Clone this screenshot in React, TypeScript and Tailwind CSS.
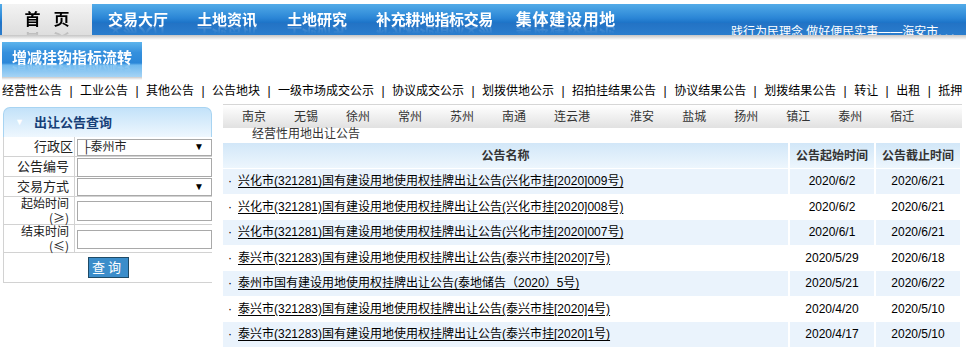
const NAV = [
  { label: "交易大厅", cls: "ml-[16px] text-[15px]" },
  { label: "土地资讯", cls: "ml-[29px] text-[15px]" },
  { label: "土地研究", cls: "ml-[30px] text-[15px]" },
  { label: "补充耕地指标交易", cls: "ml-[29px] text-[15px] tracking-[-0.4px]" },
  { label: "集体建设用地", cls: "ml-[23px] text-[16px] tracking-[0.7px]" },
];

const LINKS = [
  "经营性公告",
  "工业公告",
  "其他公告",
  "公告地块",
  "一级市场成交公示",
  "协议成交公示",
  "划拨供地公示",
  "招拍挂结果公告",
  "协议结果公告",
  "划拨结果公告",
  "转让",
  "出租",
  "抵押",
];

const CITIES = ["南京", "无锡", "徐州", "常州", "苏州", "南通", "连云港", "淮安", "盐城", "扬州", "镇江", "泰州", "宿迁"];

const ROWS = [
  { title: "兴化市(321281)国有建设用地使用权挂牌出让公告(兴化市挂[2020]009号)", start: "2020/6/2", end: "2020/6/21" },
  { title: "兴化市(321281)国有建设用地使用权挂牌出让公告(兴化市挂[2020]008号)", start: "2020/6/2", end: "2020/6/21" },
  { title: "兴化市(321281)国有建设用地使用权挂牌出让公告(兴化市挂[2020]007号)", start: "2020/6/1", end: "2020/6/21" },
  { title: "泰兴市(321283)国有建设用地使用权挂牌出让公告(泰兴市挂[2020]7号)", start: "2020/5/29", end: "2020/6/18" },
  { title: "泰州市国有建设用地使用权挂牌出让公告(泰地储告（2020）5号)", start: "2020/5/21", end: "2020/6/22" },
  { title: "泰兴市(321283)国有建设用地使用权挂牌出让公告(泰兴市挂[2020]4号)", start: "2020/4/20", end: "2020/5/10" },
  { title: "泰兴市(321283)国有建设用地使用权挂牌出让公告(泰兴市挂[2020]1号)", start: "2020/4/17", end: "2020/5/10" },
];

const reflect =
  "[-webkit-box-reflect:below_-5px_linear-gradient(transparent_45%,rgba(255,255,255,0.28))]";

function Arrow() {
  return <span className="text-[10px] leading-none text-black">▼</span>;
}

export default function App() {
  return (
    <div className="h-[350px] w-[966px] overflow-hidden bg-white font-['Liberation_Sans','Noto_Sans_CJK_SC',sans-serif] text-[12px] text-black">
      {/* top nav */}
      <div className="pt-[4px]">
        <div className="relative flex h-[31px] items-center overflow-hidden bg-[linear-gradient(to_bottom,#52abe8_0%,#2b86d6_45%,#1d74c8_60%,#2373c5_62%,#2a7dcd_100%)]">
          <div className="ml-[2px] flex h-full w-[90px] items-center justify-center gap-[13px] bg-[linear-gradient(to_bottom,#f3f3f3,#dedede)] text-[16px] font-bold text-black">
            <span className={reflect}>首</span>
            <span className={reflect}>页</span>
          </div>
          {NAV.map((n) => (
            <span key={n.label} className={`${n.cls} ${reflect} font-bold leading-[18px] text-white`}>
              {n.label}
            </span>
          ))}
          <span className="absolute left-[731px] top-[21px] whitespace-nowrap text-[12px] leading-[14px] text-white">
            践行为民理念 做好便民实事——海安市<span className="tracking-[3px]">...</span>
          </span>
        </div>
        <div className="h-[5px] bg-[linear-gradient(to_bottom,#c4c4c4,#ffffff)]" />
      </div>

      {/* feature button */}
      <div className="ml-[2px] mt-[2px] flex h-[35px] w-[140px] items-start justify-center bg-[linear-gradient(to_bottom,#5db4ec_0%,#3590dd_30%,#2b87d8_60%,#6fb9ef_66%,#a6d4f5_100%)] pt-[7px] text-[15px] font-bold leading-[18px] text-white">
        <span className={reflect}>增减挂钩指标流转</span>
      </div>
      <div className="ml-[2px] h-[3px] w-[140px] bg-[linear-gradient(to_bottom,#c9c9c9,#ffffff)]" />

      {/* category links */}
      <div className="h-[24px] whitespace-nowrap pl-[2px] leading-[22px]">
        {LINKS.map((l, i) => (
          <span key={l}>
            {i > 0 && <span className="inline-block w-[18px] text-center">|</span>}
            {l}
          </span>
        ))}
      </div>

      <div className="flex">
        {/* sidebar */}
        <aside className="ml-[3px] mt-[3px] w-[209px]">
          <div className="flex h-[30px] items-center rounded-t-[7px] border border-b-0 border-[#a8d4f2] bg-[linear-gradient(to_bottom,#c3e2f9,#eef7fe)] pl-[11px]">
            <span className="text-[9px] leading-none text-white">▼</span>
            <span className="ml-[10px] text-[13px] font-bold text-[#163f78]">出让公告查询</span>
          </div>
          <div className="border-b border-l border-[#d2d2d2] text-[13px] text-[#222]">
            <div className="grid h-[20px] grid-cols-[71px_1fr] border-b border-[#d2d2d2]">
              <div className="border-r border-[#d2d2d2] pr-[1px] text-right leading-[20px]">行政区</div>
              <div className="flex items-center pl-[2px]">
                <div className="flex h-[17px] w-full items-center justify-between border border-[#a9a9a9] pl-[4px] pr-[7px] text-[12px]">
                  <span>├泰州市</span>
                  <Arrow />
                </div>
              </div>
            </div>
            <div className="grid h-[20px] grid-cols-[71px_1fr] border-b border-[#d2d2d2]">
              <div className="border-r border-[#d2d2d2] pr-[5px] text-right leading-[20px]">公告编号</div>
              <div className="flex items-center pl-[2px]">
                <div className="h-[19px] w-full border border-[#a9a9a9]" />
              </div>
            </div>
            <div className="grid h-[20px] grid-cols-[71px_1fr] border-b border-[#d2d2d2]">
              <div className="border-r border-[#d2d2d2] pr-[5px] text-right leading-[20px]">交易方式</div>
              <div className="flex items-center pl-[2px]">
                <div className="flex h-[18px] w-full items-center justify-end border border-[#a9a9a9] pr-[7px]">
                  <Arrow />
                </div>
              </div>
            </div>
            <div className="grid h-[28px] grid-cols-[71px_1fr] border-b border-[#d2d2d2]">
              <div className="flex flex-col items-end border-r border-[#d2d2d2] pr-[5px] text-[12px] leading-[14px]">
                <span>起始时间</span>
                <span className="font-['Noto_Sans_CJK_SC',sans-serif]">(≥)</span>
              </div>
              <div className="flex items-center pl-[2px]">
                <div className="h-[20px] w-full border border-[#a9a9a9]" />
              </div>
            </div>
            <div className="grid h-[28px] grid-cols-[71px_1fr] border-b border-[#d2d2d2]">
              <div className="flex flex-col items-end border-r border-[#d2d2d2] pr-[5px] text-[12px] leading-[14px]">
                <span>结束时间</span>
                <span className="font-['Noto_Sans_CJK_SC',sans-serif]">(≤)</span>
              </div>
              <div className="flex items-center pl-[2px]">
                <div className="h-[19px] w-full border border-[#a9a9a9]" />
              </div>
            </div>
            <div className="flex h-[29px] items-center justify-center">
              <button className="h-[21px] w-[41px] border border-[#1e4a66] bg-[#3b8dca] text-[13px] leading-[19px] tracking-[3px] text-white">
                查询
              </button>
            </div>
          </div>
        </aside>

        {/* main list */}
        <section className="ml-[11px] w-[739px]">
          <div className="flex h-[24px] items-center gap-[28px] border-t border-[#d6d6d6] bg-[linear-gradient(to_bottom,#ffffff,#e1e1e1)] pl-[19px] text-[#333]">
            {CITIES.map((c) => (
              <span key={c} className={c === "连云港" ? "mr-[12px]" : ""}>
                {c}
              </span>
            ))}
          </div>
          <div className="h-[15px] pl-[29px] leading-[13px] text-[#333]">经营性用地出让公告</div>
          <div className="grid w-[737px] grid-cols-[565px_84px_84px] gap-x-[2px] gap-y-[1px]">
            <div className="flex h-[25px] items-center justify-center bg-[linear-gradient(to_bottom,#d2e7f8,#edf6fd)] font-bold text-[#333]">
              公告名称
            </div>
            <div className="flex h-[25px] items-center justify-center bg-[linear-gradient(to_bottom,#d2e7f8,#edf6fd)] font-bold text-[#333]">
              公告起始时间
            </div>
            <div className="flex h-[25px] items-center justify-center bg-[linear-gradient(to_bottom,#d2e7f8,#edf6fd)] font-bold text-[#333]">
              公告截止时间
            </div>
            {ROWS.map((r, i) => {
              const bg = i % 2 === 0 ? "bg-[#eaf3fc]" : "bg-white";
              return [
                <div key={`t${i}`} className={`flex h-[24.5px] items-center whitespace-nowrap pl-[5px] ${bg}`}>
                  <span>·</span>
                  <span className="ml-[6px] underline underline-offset-2">{r.title}</span>
                </div>,
                <div key={`s${i}`} className={`flex h-[24.5px] items-center justify-center ${bg}`}>
                  {r.start}
                </div>,
                <div key={`e${i}`} className={`flex h-[24.5px] items-center justify-center ${bg}`}>
                  {r.end}
                </div>,
              ];
            })}
          </div>
        </section>
      </div>
    </div>
  );
}
